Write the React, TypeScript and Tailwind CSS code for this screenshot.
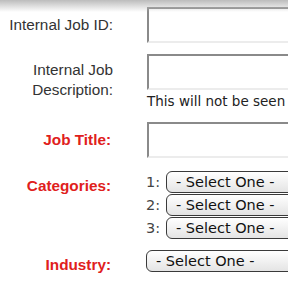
import React from 'react'

const label = 'w-[113px] shrink-0 text-right text-[15.3px] leading-[20px] text-[#333]'
const redLabel = 'w-[111px] mr-[2px] shrink-0 text-right text-[15.3px] leading-[20px] font-bold text-[#e0201c]'
const input = 'h-[36px] w-[220px] shrink-0 border-2 border-t-[#8a8a8a] border-l-[#8a8a8a] border-b-[#ececec] border-r-[#ececec] bg-white'
const select =
  'h-[22px] w-[200px] shrink-0 rounded-[6px] border border-[#3a3a3a] bg-gradient-to-b from-white to-[#e4e4e4] pl-[9px] text-left text-[14.5px] leading-[20px] text-[#111] font-["DejaVu_Sans",sans-serif]'

function Select({ className = '', empty = false }: { className?: string; empty?: boolean }) {
  return <div className={`${select} ${className}`}>{empty ? null : '- Select One -'}</div>
}

export default function App() {
  return (
    <div className="relative h-[288px] w-[288px] overflow-hidden bg-white font-['Liberation_Sans',Arial,sans-serif]">
      {/* top shadow */}
      <div className="pointer-events-none absolute inset-x-0 top-0 z-10 h-[12px] bg-gradient-to-b from-[#bcbcbc] to-transparent" />

      <div className="flex flex-col pt-[7px]">
        {/* Internal Job ID */}
        <div className="flex items-center gap-[34px]">
          <div className={label}>Internal Job ID:</div>
          <div className={input} />
        </div>

        {/* Internal Job Description */}
        <div className="mt-[11px] flex items-start gap-[34px]">
          <div className={`${label} pt-[6px]`}>
            Internal Job
            <br />
            Description:
          </div>
          <div className="flex flex-col">
            <div className={input} />
            <div className="mt-[1px] whitespace-nowrap text-[13.5px] leading-[20px] text-[#222] font-['DejaVu_Sans',sans-serif]">
              This will not be seen
            </div>
          </div>
        </div>

        {/* Job Title */}
        <div className="mt-[11px] flex items-center gap-[34px]">
          <div className={redLabel}>Job Title:</div>
          <div className={input} />
        </div>

        {/* Categories */}
        <div className="mt-[13px] flex items-start gap-[33px]">
          <div className={`${redLabel} pt-[5px]`}>Categories:</div>
          <div className="flex flex-col gap-[1px]">
            {['1:', '2:', '3:'].map(n => (
              <div key={n} className="flex items-center">
                <span className="w-[20px] shrink-0 text-[14.5px] leading-[20px] text-[#444] font-['DejaVu_Sans',sans-serif]">{n}</span>
                <Select />
              </div>
            ))}
          </div>
        </div>

        {/* Industry */}
        <div className="mt-[11px] flex items-start gap-[33px]">
          <div className={`${redLabel} pt-[5px]`}>Industry:</div>
          <Select />
        </div>

        <div className="mt-[14px] flex gap-[35px]">
          <div className="w-[113px] shrink-0" />
          <Select className="w-[134px]" empty />
        </div>
      </div>
    </div>
  )
}
